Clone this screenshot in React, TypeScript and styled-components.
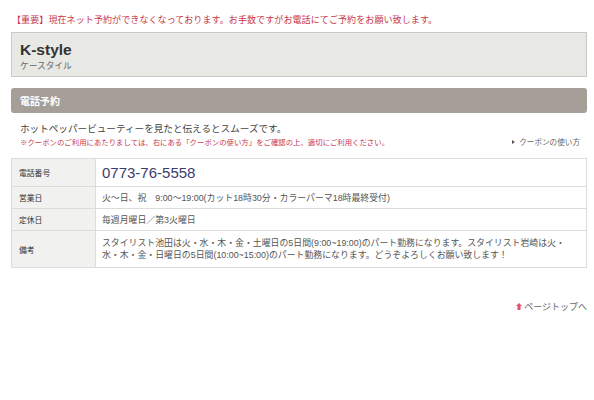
import React from 'react';
import styled, { createGlobalStyle } from 'styled-components';

const GlobalStyle = createGlobalStyle`
  body {
    margin: 0;
    background: #fff;
    font-family: "Liberation Sans", "Noto Sans CJK JP", sans-serif;
    color: #555;
  }
`;

const Page = styled.div`
  padding: 14px 7px 0 11px;
`;

const Notice = styled.p`
  margin: 0 0 6px 1px;
  font-size: 9px;
  line-height: 12px;
  letter-spacing: 0.1px;
  color: #c8364a;
`;

const ShopHeader = styled.div`
  height: 45px;
  box-sizing: border-box;
  background: #e8e8e5;
  border: 1px solid #c9c9c5;
  padding: 8px 8px 0;
`;

const ShopName = styled.h1`
  margin: 0;
  font-size: 15.5px;
  line-height: 18px;
  font-weight: bold;
  color: #333;
`;

const ShopKana = styled.div`
  margin-top: 1px;
  font-size: 8.7px;
  line-height: 12px;
  color: #666;
`;

const SectionBar = styled.h2`
  margin: 11px 0 0;
  height: 25px;
  display: flex;
  align-items: center;
  padding: 0 9px;
  background: #a59f97;
  border-radius: 3px;
  color: #fff;
  font-size: 10px;
  font-weight: bold;
`;

const Intro = styled.div`
  padding: 9px 9px 0;
`;

const IntroText = styled.p`
  margin: 0;
  font-size: 9.6px;
  line-height: 13px;
  color: #444;
`;

const NoteRow = styled.div`
  display: flex;
  justify-content: space-between;
  align-items: center;
  height: 13px;
`;

const Note = styled.span`
  font-size: 7.4px;
  color: #c8364a;
`;

const GuideLink = styled.a`
  display: flex;
  align-items: center;
  gap: 4px;
  margin-right: -2px;
  font-size: 7.6px;
  color: #666;
  text-decoration: none;
`;

const Triangle = styled.span`
  width: 0;
  height: 0;
  border-top: 2.5px solid transparent;
  border-bottom: 2.5px solid transparent;
  border-left: 3.5px solid #555;
`;

const InfoTable = styled.table`
  margin-top: 10px;
  width: 100%;
  border-collapse: collapse;
  border: 1px solid #dcdcdc;
`;

const Label = styled.th<{ $h: number }>`
  width: 84px;
  height: ${p => p.$h}px;
  box-sizing: border-box;
  padding: 0 7px;
  background: #f1f1ef;
  border: 1px solid #dcdcdc;
  text-align: left;
  font-size: 7.8px;
  font-weight: normal;
  color: #333;
`;

const Value = styled.td<{ $big?: boolean }>`
  padding: 4px 6px;
  border: 1px solid #dcdcdc;
  font-size: ${p => (p.$big ? '15px' : '8.9px')};
  line-height: ${p => (p.$big ? '18px' : '12px')};
  color: ${p => (p.$big ? '#3d3b6e' : '#555')};
`;

const Footer = styled.div`
  display: flex;
  justify-content: flex-end;
  margin-top: 32px;
`;

const PageTop = styled.a`
  display: flex;
  align-items: center;
  gap: 2px;
  font-size: 9px;
  color: #666;
  text-decoration: none;
  svg {
    display: block;
  }
`;

export default function App() {
  return (
    <>
      <GlobalStyle />
      <Page>
        <Notice>【重要】現在ネット予約ができなくなっております。お手数ですがお電話にてご予約をお願い致します。</Notice>
        <ShopHeader>
          <ShopName>K-style</ShopName>
          <ShopKana>ケースタイル</ShopKana>
        </ShopHeader>
        <SectionBar>電話予約</SectionBar>
        <Intro>
          <IntroText>ホットペッパービューティーを見たと伝えるとスムーズです。</IntroText>
          <NoteRow>
            <Note>※クーポンのご利用にあたりましては、右にある「クーポンの使い方」をご確認の上、適切にご利用ください。</Note>
            <GuideLink href="#">
              <Triangle />
              クーポンの使い方
            </GuideLink>
          </NoteRow>
        </Intro>
        <InfoTable>
          <tbody>
            <tr>
              <Label $h={28}>電話番号</Label>
              <Value $big>0773-76-5558</Value>
            </tr>
            <tr>
              <Label $h={22}>営業日</Label>
              <Value>火〜日、祝　9:00〜19:00(カット18時30分・カラーパーマ18時最終受付)</Value>
            </tr>
            <tr>
              <Label $h={22}>定休日</Label>
              <Value>毎週月曜日／第3火曜日</Value>
            </tr>
            <tr>
              <Label $h={37}>備考</Label>
              <Value>
                スタイリスト池田は火・水・木・金・土曜日の5日間(9:00~19:00)のパート勤務になります。スタイリスト岩崎は火・水・木・金・日曜日の5日間(10:00~15:00)のパート勤務になります。どうぞよろしくお願い致します！
              </Value>
            </tr>
          </tbody>
        </InfoTable>
        <Footer>
          <PageTop href="#">
            <svg width="6" height="7" viewBox="0 0 6 7">
              <path d="M3 0 L6 3 L4.5 3 L4.5 7 L1.5 7 L1.5 3 L0 3 Z" fill="#e4506f" />
            </svg>
            ページトップへ
          </PageTop>
        </Footer>
      </Page>
    </>
  );
}
